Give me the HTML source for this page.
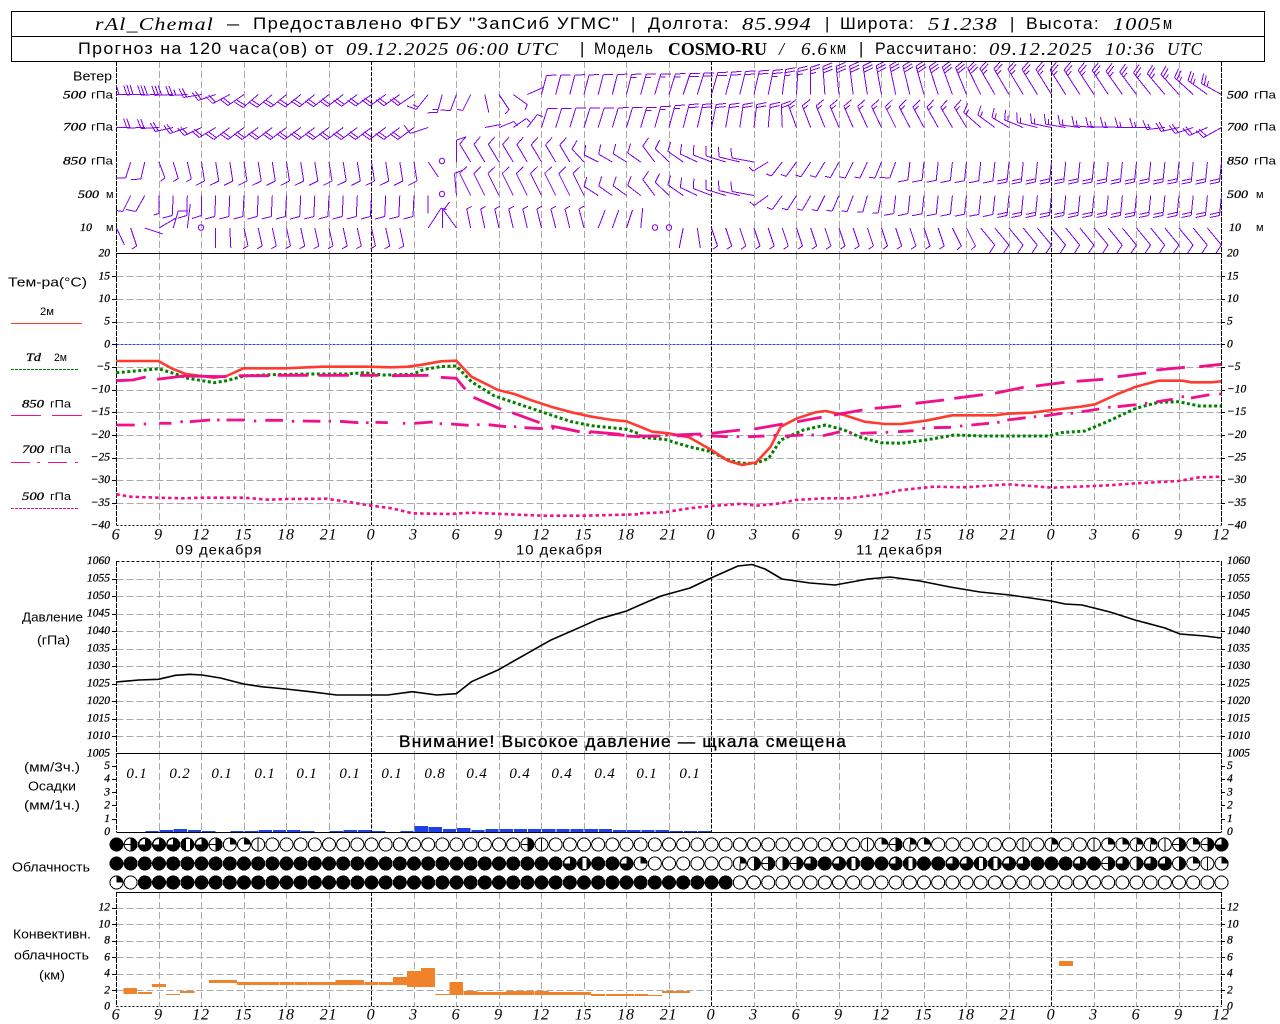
<!DOCTYPE html>
<html lang="ru"><head><meta charset="utf-8"><title>rAl_Chemal</title>
<style>
html,body{margin:0;padding:0;background:#fff;overflow:hidden}
svg{display:block}
text{fill:#000;dominant-baseline:central;white-space:pre}
.s{font:16.5px "Liberation Sans","Noto Sans CJK SC",sans-serif;letter-spacing:1.2px}
.i{font:italic 18px "Liberation Serif","Noto Serif CJK SC",serif;letter-spacing:1px}
.b{font:bold 18px "Liberation Serif",serif}
.l{font:13px "Liberation Sans",sans-serif}
.y{font:italic 11.5px "Liberation Serif",serif;stroke:#000;stroke-width:.25}
.x{font:italic 16px "Liberation Serif",serif;text-anchor:middle;letter-spacing:.8px}
.d{font:14px "Liberation Sans",sans-serif;letter-spacing:.9px}
.u{font:11px "Liberation Sans",sans-serif}
.e{text-anchor:end}
</style></head><body>
<svg id="s" xmlns="http://www.w3.org/2000/svg" width="1280" height="1024" viewBox="0 0 1280 1024">
<g id="g"></g>
<rect x="11.5" y="11.5" width="1253" height="50" fill="none" stroke="#000"/>
<line x1="11" x2="1265" y1="36.5" y2="36.5" stroke="#000"/>
<text class="i" x="95" y="24" textLength="119" font-size="19">rAl_Chemal</text>
<text class="s" x="227" y="24" textLength="13">—</text>
<text class="s" x="253" y="24" textLength="367">Предоставлено ФГБУ "ЗапСиб УГМС"</text>
<text class="s" x="631" y="24">|</text>
<text class="s" x="648" y="24" textLength="82">Долгота:</text>
<text class="i" x="742" y="24" textLength="70">85.994</text>
<text class="s" x="825" y="24">|</text>
<text class="s" x="840" y="24" textLength="75">Широта:</text>
<text class="i" x="928" y="24" textLength="70">51.238</text>
<text class="s" x="1010" y="24">|</text>
<text class="s" x="1026" y="24" textLength="74">Высота:</text>
<text class="i" x="1113" y="24" textLength="49">1005</text>
<text class="s" x="1163" y="24" textLength="10">м</text>
<text class="s" x="78" y="49" textLength="257">Прогноз на 120 часа(ов) от</text>
<text class="i" x="346" y="49" textLength="213">09.12.2025 06:00 UTC</text>
<text class="s" x="580" y="49">|</text>
<text class="s" x="594" y="49" textLength="60">Модель</text>
<text class="b" x="668" y="49" textLength="99">COSMO-RU</text>
<text class="i" x="779" y="49">/</text>
<text class="i" x="801" y="49" textLength="27">6.6</text>
<text class="s" x="830" y="49" textLength="17">км</text>
<text class="s" x="859" y="49">|</text>
<text class="s" x="875" y="49" textLength="103">Рассчитано:</text>
<text class="i" x="989" y="49" textLength="104">09.12.2025</text>
<text class="i" x="1105" y="49" textLength="50">10:36</text>
<text class="i" x="1167" y="49" textLength="36">UTC</text>

<text class="l" x="73" y="76" textLength="39">Ветер</text>
<text class="y" x="63" y="95.5" textLength="23">500</text><text class="u" x="91" y="95.5" textLength="22">гПа</text>
<text class="y" x="63" y="127.5" textLength="23">700</text><text class="u" x="91" y="127.5" textLength="22">гПа</text>
<text class="y" x="63" y="161.5" textLength="23">850</text><text class="u" x="91" y="161.5" textLength="22">гПа</text>
<text class="y" x="78" y="195" textLength="21">500</text><text class="u" x="106" y="195">м</text>
<text class="y" x="80" y="228" textLength="12">10</text><text class="u" x="106" y="228">м</text>
<text class="y" x="1227" y="95.5" textLength="21">500</text><text class="u" x="1254" y="95.5" textLength="22">гПа</text>
<text class="y" x="1227" y="127.5" textLength="21">700</text><text class="u" x="1254" y="127.5" textLength="22">гПа</text>
<text class="y" x="1227" y="161.5" textLength="21">850</text><text class="u" x="1254" y="161.5" textLength="22">гПа</text>
<text class="y" x="1227" y="195" textLength="21">500</text><text class="u" x="1256" y="195">м</text>
<text class="y" x="1229" y="228" textLength="12">10</text><text class="u" x="1256" y="228">м</text>

<text class="l" x="8" y="282" textLength="79">Тем-ра(°С)</text>
<text class="u" x="40" y="312" textLength="14">2м</text>
<text class="y" x="26" y="358" textLength="15">Td</text><text class="u" x="54" y="358" textLength="13">2м</text>
<text class="y" x="22" y="404.5" textLength="22">850</text><text class="u" x="50" y="404.5" textLength="21">гПа</text>
<text class="y" x="22" y="450" textLength="22">700</text><text class="u" x="50" y="450" textLength="21">гПа</text>
<text class="y" x="22" y="497" textLength="22">500</text><text class="u" x="50" y="497" textLength="21">гПа</text>

<g class="y e">
<text x="110" y="253.7">20</text><text x="110" y="276.3">15</text><text x="110" y="299">10</text><text x="110" y="321.6">5</text><text x="110" y="344.3">0</text><text x="110" y="367">−5</text><text x="110" y="389.6">−10</text><text x="110" y="412.2">−15</text><text x="110" y="434.9">−20</text><text x="110" y="457.5">−25</text><text x="110" y="480.2">−30</text><text x="110" y="502.8">−35</text><text x="110" y="525.5">−40</text>
<text x="110" y="561">1060</text><text x="110" y="578.5">1055</text><text x="110" y="596">1050</text><text x="110" y="613.5">1045</text><text x="110" y="631">1040</text><text x="110" y="648.5">1035</text><text x="110" y="666">1030</text><text x="110" y="683.5">1025</text><text x="110" y="701">1020</text><text x="110" y="718.5">1015</text><text x="110" y="736">1010</text><text x="110" y="753.3">1005</text>
<text x="110" y="766">5</text><text x="110" y="779.2">4</text><text x="110" y="792.4">3</text><text x="110" y="805.6">2</text><text x="110" y="818.8">1</text><text x="110" y="832">0</text>
<text x="110" y="907.7">12</text><text x="110" y="924.3">10</text><text x="110" y="940.7">8</text><text x="110" y="957.3">6</text><text x="110" y="973.7">4</text><text x="110" y="990.3">2</text><text x="110" y="1006.7">0</text>
</g>
<g class="y">
<text x="1227" y="253.7">20</text><text x="1227" y="276.3">15</text><text x="1227" y="299">10</text><text x="1227" y="321.6">5</text><text x="1227" y="344.3">0</text><text x="1227" y="367">−5</text><text x="1227" y="389.6">−10</text><text x="1227" y="412.2">−15</text><text x="1227" y="434.9">−20</text><text x="1227" y="457.5">−25</text><text x="1227" y="480.2">−30</text><text x="1227" y="502.8">−35</text><text x="1227" y="525.5">−40</text>
<text x="1227" y="561">1060</text><text x="1227" y="578.5">1055</text><text x="1227" y="596">1050</text><text x="1227" y="613.5">1045</text><text x="1227" y="631">1040</text><text x="1227" y="648.5">1035</text><text x="1227" y="666">1030</text><text x="1227" y="683.5">1025</text><text x="1227" y="701">1020</text><text x="1227" y="718.5">1015</text><text x="1227" y="736">1010</text><text x="1227" y="753.3">1005</text>
<text x="1227" y="766">5</text><text x="1227" y="779.2">4</text><text x="1227" y="792.4">3</text><text x="1227" y="805.6">2</text><text x="1227" y="818.8">1</text><text x="1227" y="832">0</text>
<text x="1227" y="907.7">12</text><text x="1227" y="924.3">10</text><text x="1227" y="940.7">8</text><text x="1227" y="957.3">6</text><text x="1227" y="973.7">4</text><text x="1227" y="990.3">2</text><text x="1227" y="1006.7">0</text>
</g>
<g class="x">
<text x="116" y="535">6</text><text x="158.5" y="535">9</text><text x="201" y="535">12</text><text x="243.5" y="535">15</text><text x="286" y="535">18</text><text x="328.5" y="535">21</text><text x="371" y="535">0</text><text x="413.5" y="535">3</text><text x="456" y="535">6</text><text x="498.5" y="535">9</text><text x="541" y="535">12</text><text x="583.5" y="535">15</text><text x="626" y="535">18</text><text x="668.5" y="535">21</text><text x="711" y="535">0</text><text x="753.5" y="535">3</text><text x="796" y="535">6</text><text x="838.5" y="535">9</text><text x="881" y="535">12</text><text x="923.5" y="535">15</text><text x="966" y="535">18</text><text x="1008.5" y="535">21</text><text x="1051" y="535">0</text><text x="1093.5" y="535">3</text><text x="1136" y="535">6</text><text x="1178.5" y="535">9</text><text x="1221" y="535">12</text>
<text x="116" y="1015">6</text><text x="158.5" y="1015">9</text><text x="201" y="1015">12</text><text x="243.5" y="1015">15</text><text x="286" y="1015">18</text><text x="328.5" y="1015">21</text><text x="371" y="1015">0</text><text x="413.5" y="1015">3</text><text x="456" y="1015">6</text><text x="498.5" y="1015">9</text><text x="541" y="1015">12</text><text x="583.5" y="1015">15</text><text x="626" y="1015">18</text><text x="668.5" y="1015">21</text><text x="711" y="1015">0</text><text x="753.5" y="1015">3</text><text x="796" y="1015">6</text><text x="838.5" y="1015">9</text><text x="881" y="1015">12</text><text x="923.5" y="1015">15</text><text x="966" y="1015">18</text><text x="1008.5" y="1015">21</text><text x="1051" y="1015">0</text><text x="1093.5" y="1015">3</text><text x="1136" y="1015">6</text><text x="1178.5" y="1015">9</text><text x="1221" y="1015">12</text>
</g>
<text class="d" x="175.5" y="549.5" textLength="87">09 декабря</text>
<text class="d" x="516" y="549.5" textLength="87">10 декабря</text>
<text class="d" x="856" y="549.5" textLength="87">11 декабря</text>

<text class="l" x="22" y="617" textLength="61">Давление</text>
<text class="l" x="37" y="640" textLength="33">(гПа)</text>
<text class="s" x="399" y="742" textLength="448" style="stroke:#000;stroke-width:.35">Внимание! Высокое давление — щкала смещена</text>

<text class="l" x="24" y="767" textLength="56">(мм/3ч.)</text>
<text class="l" x="28" y="786" textLength="48">Осадки</text>
<text class="l" x="24" y="805" textLength="56">(мм/1ч.)</text>
<g class="x" style="font-size:15px">
<text x="137" y="774">0.1</text><text x="180" y="774">0.2</text><text x="222" y="774">0.1</text><text x="265" y="774">0.1</text><text x="307" y="774">0.1</text><text x="350" y="774">0.1</text><text x="392" y="774">0.1</text><text x="435" y="774">0.8</text><text x="477" y="774">0.4</text><text x="520" y="774">0.4</text><text x="562" y="774">0.4</text><text x="605" y="774">0.4</text><text x="647" y="774">0.1</text><text x="690" y="774">0.1</text>
</g>
<text class="l" x="12" y="867" textLength="78">Облачность</text>
<text class="l" x="13" y="934" textLength="78">Конвективн.</text>
<text class="l" x="14" y="955" textLength="75">облачность</text>
<text class="l" x="39" y="975" textLength="26">(км)</text>
</svg>
<script>
(function(){
document.querySelectorAll('text[textLength]').forEach(function(t){t.setAttribute('lengthAdjust','spacingAndGlyphs')});
var o='',G='#a9a9a9',K='#000';
function ln(a,b,c,d,col,da,w){o+='<line x1="'+a+'" y1="'+b+'" x2="'+c+'" y2="'+d+'" stroke="'+col+'"'+(da?' stroke-dasharray="'+da+'"':'')+(w?' stroke-width="'+w+'"':'')+'/>'}
var XL=116.5,XR=1221.5;
o+='<g shape-rendering="crispEdges">';
var panels=[[61,253],[253,525],[561,753],[753,832],[892,1006.7]];
function hl(y){ln(XL,y,XR,y,G,'7 3');ln(112,y,XL,y,K);ln(XR,y,1225,y,K)}
[276.3,299,321.6,367,389.6,412.2,434.9,457.5,480.2,502.8,578.5,596,613.5,631,648.5,666,683.5,701,718.5,736,907.7,924.3,940.7,957.3,973.7,990.3].forEach(function(y){hl(Math.round(y)+.5)});
[344.5].forEach(function(y){ln(XL,y,XR,y,'#1f3fff','3 1');ln(112,y,XL,y,K);ln(XR,y,1225,y,K)});
[766,779,792,805,819].forEach(function(y){ln(112,y+.5,XL,y+.5,K);ln(XR,y+.5,1225,y+.5,K)});
panels.forEach(function(p){
 for(var k=0;k<=26;k++){var x=Math.round(116+42.5*k)+.5;var zero=(k==6||k==14||k==22);
  if(k==0||k==26){ln(k==0?XL:XR,p[0],k==0?XL:XR,p[1],K,'5 1');continue}
  ln(x,p[0],x,p[1],zero?K:G,zero?'4 1.5':'7 3');}
});
ln(XL,253.5,XR,253.5,K);ln(XL,753.5,XR,753.5,K);ln(XL,832.5,XR,832.5,K);ln(XL,892.5,XR,892.5,K);
ln(XL,525.5,XR,525.5,K,'2 2');ln(XL,561.5,XR,561.5,K,'3 2');ln(XL,1006.5,XR,1006.5,K,'2 2');
ln(11,323.5,82,323.5,'#ff3b30');ln(11,369.5,78,369.5,'#008000','3 1');
var P='#f0108c';ln(11,415.5,41,415.5,P);ln(52,415.5,82,415.5,P);
ln(11,462.5,30,462.5,P);ln(37,462.5,40,462.5,P);ln(48,462.5,67,462.5,P);ln(75,462.5,78,462.5,P);
ln(11,508.5,78,508.5,P,'3 1');
function bar(i,t){var x=116.5+14.17*i;o+='<rect x="'+(x+.5)+'" y="'+t+'" width="13.3" height="'+(832-t)+'" fill="#1f3fe8"/>'}
var tops={2:831,3:830,4:829,5:830,6:831,8:831,9:831,10:830,11:830,12:830,13:831,15:831,16:830,17:830,18:831,20:831,21:826,22:827,23:829,24:828,25:830,26:829};
for(var k in tops)bar(+k,tops[k]);
for(var i=27;i<35;i++)bar(i,829);for(i=35;i<39;i++)bar(i,830);for(i=39;i<42;i++)bar(i,831);
function cb(xa,xb,ya,yb,off){var x1=(off||0)+xa/2.45,x2=(off||0)+xb/2.45,y1=750+ya/3,y2=750+yb/3;o+='<rect x="'+x1+'" y="'+y1+'" width="'+(x2-x1)+'" height="'+(y2-y1)+'" fill="#f0832a"/>'}
[[303,336,714,732],[338,372,726,732],[372,407,702,711],[407,441,732,735],[441,476,723,729],[512,546,690,699],[546,581,690,699],[581,685,696,705],[686,720,696,705],[721,753,696,705],[755,822,696,705],[822,892,690,705],[893,927,696,705],[929,963,696,705],[963,997,681,705],[997,1031,663,711],[1031,1066,654,711],[1066,1101,732,735],[1101,1134,696,735],[1136,1170,723,735],[1170,1240,726,735],[1240,1308,723,735],[1310,1344,723,735],[1344,1448,726,735],[1448,1482,732,738],[1485,1520,732,738],[1520,1554,732,738],[1556,1568,732,738]].forEach(function(a){cb(a[0],a[1],a[2],a[3])});
[[0,20,732,738],[20,54,735,738],[54,122,723,729],[1027,1061,633,648]].forEach(function(a){cb(a[0],a[1],a[2],a[3],640)});
o+='</g>';

function pts(l,r){var s=[];l.forEach(function(p){s.push((p[0]/2.45).toFixed(1)+','+(250+p[1]/3).toFixed(1))});r.forEach(function(p){s.push((640+p[0]/2.45).toFixed(1)+','+(250+p[1]/3).toFixed(1))});return s.join(' ')}
function pl(p,c,w,da){o+='<polyline fill="none" points="'+p+'" stroke="'+c+'" stroke-width="'+w+'" stroke-linejoin="round"'+(da?' stroke-dasharray="'+da+'"':'')+'/>'}
var PK='#f0108c';
pl(pts([[285,368],[340,362],[388,356],[425,370],[460,385],[525,398],[555,392],[597,378],[660,374],[760,372],[850,372],[890,368],[940,375],[1010,373],[1040,358],[1080,350],[1118,348],[1155,395],[1210,437],[1270,462],[1350,495],[1400,515],[1450,527],[1535,538],[1568,552]],[[0,562],[60,568],[120,590],[175,605],[215,630],[250,640],[285,640],[315,625],[345,570],[400,540],[455,525],[500,540],[540,562],[590,578],[640,580],[700,570],[770,555],[840,558],[1000,558],[1030,548],[1090,543],[1150,512],[1215,475],[1270,457],[1320,455],[1370,468],[1424,468]]),'#008000',3,'3 2.5');
pl(pts([[285,333],[388,333],[420,355],[455,372],[525,383],[555,378],[597,355],[700,355],[790,350],[900,350],[960,352],[1000,350],[1040,343],[1080,334],[1118,332],[1155,380],[1220,420],[1260,432],[1300,450],[1350,470],[1400,487],[1450,500],[1500,510],[1535,514],[1568,530]],[[0,530],[30,545],[70,550],[120,562],[175,600],[215,632],[250,645],[285,637],[320,590],[345,530],[385,505],[430,487],[455,483],[500,495],[550,515],[600,522],[640,522],[700,512],[765,496],[870,496],[900,491],[960,488],[1010,480],[1080,470],[1115,463],[1170,432],[1215,410],[1270,392],[1330,392],[1350,397],[1400,397],[1424,394]]),'#ff3b30',2.6);
function segs(l,r,w){l.forEach(function(s){var a=[];for(var i=0;i<s.length;i+=2)a.push([s[i],s[i+1]]);pl(pts(a,[]),PK,w)});r.forEach(function(s){var a=[];for(var i=0;i<s.length;i+=2)a.push([s[i],s[i+1]]);pl(pts([],a),PK,w)})}
function dots(l,r,w){l.forEach(function(s){pl(pts([[s[0]-3,s[1]],[s[0]+3,s[1]]],[]),PK,w)});r.forEach(function(s){pl(pts([],[[s[0]-3,s[1]],[s[0]+3,s[1]]]),PK,w)})}
/* 850 */
segs([[285,392,325,390,357,381],[385,388,450,378,555,380],[585,377,660,377],[680,376,755,376],[780,376,855,376],[882,376,928,376],[960,377,1050,376],[1080,382,1118,385,1140,418],[1160,442,1228,478],[1255,488,1322,518],[1350,528,1420,545],[1445,545,1520,553],[1535,558,1568,560]],
[[0,558,50,558],[80,555,150,552],[175,550,245,540],[280,537,350,522],[385,515,445,502],[475,495,545,480],[575,475,640,468],[675,460,745,450],[770,445,840,434],[870,430,940,412],[970,408,1040,397],[1070,394,1135,388],[1170,380,1240,369],[1265,360,1335,352],[1370,350,1424,343]],2.8);
/* 700 */
segs([[285,525,330,525],[390,520,420,520],[465,515,515,510],[555,510,600,510],[650,511,693,511],[742,513,785,514],[833,514,878,518],[920,517,950,518],[1015,520,1060,516],[1105,522,1148,526],[1197,524,1240,530],[1285,533,1330,536],[1380,535,1420,545],[1490,552,1530,556]],
[[0,558,40,559],[90,558,130,555],[175,558,215,560],[265,560,305,558],[355,558,400,555],[448,557,490,545],[540,550,580,548],[632,545,670,542],[720,533,762,532],[812,525,855,520],[900,510,945,503],[990,498,1035,490],[1082,485,1125,477],[1170,470,1215,464],[1265,455,1305,448],[1350,444,1395,434]],2.8);
dots([[355,522],[445,515],[535,510],[625,513],[718,514],[808,514],[900,518],[990,520],[1080,521],[1172,524],[1262,530],[1355,535],[1445,548],[1560,558]],[[65,556],[150,558],[240,560],[330,556],[423,555],[515,548],[605,547],[695,535],[787,528],[878,517],[968,500],[1058,490],[1150,472],[1240,460],[1330,440],[1422,432]],2.8);
pl(pts([[285,733],[320,740],[388,743],[450,745],[490,743],[597,743],[660,749],[700,747],[800,746],[860,757],[910,767],[960,775],[1010,790],[1100,792],[1155,788],[1230,792],[1330,797],[1430,797],[1568,793]],[[0,790],[60,787],[120,775],[175,768],[250,761],[285,767],[345,760],[380,750],[450,745],[510,745],[590,733],[640,720],[720,710],[800,712],[900,703],[950,707],[1010,713],[1070,710],[1150,706],[1215,700],[1320,693],[1370,682],[1424,680]]),PK,2.6,'3.5 3');
var ps=[[285,381],[340,375],[388,373],[430,361],[465,358],[495,360],[540,369],[597,387],[640,395],[700,402],[760,410],[825,420],[900,420],[950,420],[1010,410],[1070,420],[1118,416],[1155,380],[1220,345],[1325,272],[1350,255],[1430,212],[1465,193],[1535,168],[1568,150]].map(function(p){return (p[0]/2.45).toFixed(1)+','+(555+p[1]/3).toFixed(1)}).join(' ');
ps+=' 661,596 690,588 711,578 738,566 752,564.5 765,569 782,579 810,583 835,585 868,579 890,577 920,581 950,587 980,592 1010,595 1051,601 1065,604 1082,605 1110,612 1135,620 1165,628 1180,634 1205,636 1221,638';
pl(ps,'#000',1.6);

o+='<clipPath id="c"><rect x="116" y="61" width="1106" height="192.5"/></clipPath><g clip-path="url(#c)" shape-rendering="crispEdges" stroke="#8000e8" fill="none">';
function barb(x,y,dx,dy,n){
 var L=Math.sqrt(dx*dx+dy*dy),ux=dx/L,uy=dy/L,px=-uy,py=ux,tx=x+dx,ty=y+dy;
 var d='M'+x.toFixed(1)+' '+y.toFixed(1)+'L'+tx.toFixed(1)+' '+ty.toFixed(1),pos=0;
 for(var k=0;k<Math.floor(n/2);k++){var a=tx-ux*pos,b=ty-uy*pos;d+='M'+a.toFixed(1)+' '+b.toFixed(1)+'L'+(a+px*9.5+ux*3).toFixed(1)+' '+(b+py*9.5+uy*3).toFixed(1);pos+=3.2}
 if(n%2){var a=tx-ux*pos,b=ty-uy*pos;d+='M'+a.toFixed(1)+' '+b.toFixed(1)+'L'+(a+px*5.5+ux*1.5).toFixed(1)+' '+(b+py*5.5+uy*1.5).toFixed(1)}
 o+='<path d="'+d+'"/>';
}
function row(yr,keys,skip){
 for(var j=0;j<keys.length-1;j++){var A=keys[j],B=keys[j+1];
  for(var i=A[0];i<B[0]||(j==keys.length-2&&i==B[0]);i++){
   if(skip&&skip.indexOf(i)>=0)continue;
   var t=(i-A[0])/(B[0]-A[0]);
   barb(116.5+14.167*i,yr,A[1]+(B[1]-A[1])*t,A[2]+(B[2]-A[2])*t,t==1?B[3]:A[3]);
  }}
}
row(94.5,[[1,-18,0,6],[5,-18,1,5],[6,-18,3,4],[8,-17,9,4],[10,-15,13,4],[21,-16,11,4],[22,-12,15,3],[23,-5,18,3],[24,-6,16,2],[25,-8,16,1],[26,4,18,0],[27,10,15,1],[28,14,10,1],[29,16,-7,0],[30,5,-19,2],[36,5,-20,3],[40,7,-21,4],[46,5,-24,5],[50,-2,-28,6],[55,-6,-29,6],[60,-11,-27,6],[62,-15,-26,5],[70,-16,-24,5],[75,-18,-20,5],[78,-20,-11,5]]);
row(127.5,[[1,-18,0,4],[3,-18,1,4],[4,-18,4,4],[6,-17,8,4],[8,-16,12,4],[21,-16,12,4],[22,-18,6,2],[26,16,-3,0],[27,15,-6,1],[28,13,-9,1],[29,10,-13,1],[30,6,-19,2],[37,6,-20,3],[40,6,-23,4],[46,2,-23,4],[47,-1,-23,4],[48,-8,-22,3],[60,-12,-20,3],[61,-17,-15,3],[63,-17,-10,3],[65,-20,-5,3],[70,-20,-1,3],[73,-18,0,3],[75,-18,4,4],[78,-18,10,4]],[23,24,25]);
row(162,[[1,-5,16,2],[2,-4,17,2],[3,6,16,1],[5,4,17,1],[6,3,19,2],[21,3,19,2],[22,10,15,0],[24,0,-22,2],[25,-11,-18,2],[32,-10,-17,2],[33,-12,-13,2],[34,-14,-7,2],[37,-13,-9,2],[38,-12,-16,2],[41,-17,-8,2],[45,-22,-4,2],[46,-15,9,1],[47,-11,14,1],[52,-8,16,1],[55,-6,16,2],[56,-2,18,2],[62,-2,19,2],[63,-2,20,4],[78,-2,20,4]],[23]);
row(195.5,[[1,-8,16,2],[2,-9,16,2],[3,0,18,1],[4,-1,20,2],[6,0,20,2],[7,-1,21,2],[21,-1,21,2],[22,0,18,0],[24,-2,-22,2],[25,-11,-22,2],[33,-11,-22,2],[34,-14,-9,2],[37,-13,-10,2],[38,-12,-16,2],[41,-17,-8,2],[45,-22,-4,2],[46,-14,10,1],[47,-10,14,1],[52,-6,16,1],[55,-2,18,2],[62,-2,19,2],[63,-2,20,4],[78,-2,20,4]],[23]);
row(228,[[0,8,17,0],[1,6,18,1],[2,18,6,0],[3,17,-10,0],[4,5,-17,2],[5,3,-24,0],[7,0,20,0],[8,1,20,0],[9,4,18,1],[20,4,18,1],[22,13,-20,1],[23,0,-20,0],[24,-13,-18,2],[25,-4,-19,1],[33,-5,-19,1],[34,7,-18,0],[36,6,-18,0],[37,2,-20,0],[40,-4,20,0],[41,3,20,0],[42,6,18,1],[58,6,18,1],[59,9,18,1],[60,9,18,1],[61,14,17,2],[77,14,17,2]],[6,21,38,39]);
[[442,161],[442,194],[201,227.5],[655,227.5],[669,227.5]].forEach(function(c){o+='<ellipse shape-rendering="auto" cx="'+c[0]+'" cy="'+c[1]+'" rx="2.6" ry="2.8"/>'});
o+='</g>';

function rp(c,n){return new Array(n+1).join(c)}
var rows=[
 [844.5,'FABBBCBAQQV'+rp('E',18)+'AV'+rp('E',22)+'VQAWQ'+rp('E',6)+'VEWEEVQQWWVAQAB'],
 [863.5,rp('F',32)+'BCFFBQ'+rp('E',6)+'WRARAB'+'FBCFFBCFFBBCCBBFFFBFABRBBRQVQ'],
 [882.5,'QE'+rp('F',42)+rp('E',35)]];
o+='<g shape-rendering="crispEdges">';
var r=6.5;
rows.forEach(function(R){var y=R[0],s=R[1];
 for(var i=0;i<s.length;i++){var x=116.5+14.167*i,c=s[i];
  var bot=x+' '+(y+r);
  var rh='M'+x+' '+(y-r)+'A'+r+' '+r+' 0 0 1 '+bot+'Z';
  var tr='M'+x+' '+y+'V'+(y-r)+'A'+r+' '+r+' 0 0 1 '+(x+r)+' '+y+'Z';
  var rr=r-1;
  var tl='M'+x+' '+y+'H'+(x-rr)+'A'+rr+' '+rr+' 0 0 1 '+x+' '+(y-rr)+'Z';
  if(c=='F'||c=='B'||c=='C'){o+='<ellipse cx="'+x+'" cy="'+y+'" rx="'+(r+.5)+'" ry="'+(r+.5)+'" fill="#000"/>';
   if(c=='B')o+='<path d="'+tl+'" fill="#fff"/>';
   if(c=='C')o+='<rect x="'+(x-1.5)+'" y="'+(y-rr)+'" width="4" height="'+(2*rr)+'" fill="#fff"/>';
   continue}
  o+='<ellipse cx="'+x+'" cy="'+y+'" rx="'+r+'" ry="'+r+'" fill="#fff" stroke="#000"/>';
  if(c=='A'||c=='R')o+='<path d="'+rh+'" fill="#000"/>';
  if(c=='A')ln(x-r,y,x,y,'#000');
  if(c=='Q'||c=='W')o+='<path d="'+tr+'" fill="#000"/>';
  if(c=='W')ln(x,y,x,y+r,'#000');
  if(c=='V')ln(x,y-r,x,y+r,'#000');
 }});
o+='</g>';
document.getElementById('g').innerHTML=o;
})();
</script>
</body></html>
